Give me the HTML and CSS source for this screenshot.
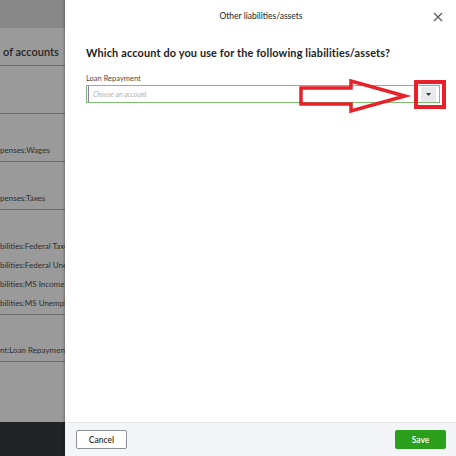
FILE: index.html
```html
<!DOCTYPE html>
<html lang="en">
<head>
    <meta charset="UTF-8">
    <meta name="viewport" content="width=device-width, initial-scale=1.0">
    <title>Other liabilities/assets</title>
    <link rel="stylesheet" href="styles.css">
</head>
<body>
    <!-- page behind the drawer, dimmed -->
    <aside class="backdrop">
        <div class="backdrop_top"></div>
        <div class="backdrop_list">
            <div class="list_head">of accounts</div>
            <div class="list_group"></div>
            <div class="list_group"><span>penses:Wages</span></div>
            <div class="list_group"><span>penses:Taxes</span></div>
            <div class="list_group multi">
                <span>bilities:Federal Taxes</span>
                <span>bilities:Federal Unemployment</span>
                <span>bilities:MS Income Tax</span>
                <span>bilities:MS Unemployment</span>
            </div>
            <div class="list_group last"><span>nt:Loan Repayment</span></div>
        </div>
        <div class="backdrop_bottom"></div>
    </aside>

    <section class="drawer">
        <header class="drawer_header">
            <span class="drawer_title">Other liabilities/assets</span>
            <button class="close_btn" type="button" aria-label="Close">
                <svg width="10" height="10" viewBox="0 0 10 10"><path d="M1 1L9 9M9 1L1 9" stroke="#555" stroke-width="1.1"/></svg>
            </button>
        </header>

        <div class="drawer_body">
            <h1>Which account do you use for the following liabilities/assets?</h1>

            <label for="loan_account">Loan Repayment</label>
            <div class="combo">
                <input type="text" id="loan_account" placeholder="Choose an account">
                <span class="combo_btn">
                    <svg width="5" height="3" viewBox="0 0 5 3"><path d="M0 0H5L2.5 3Z" fill="#333"/></svg>
                </span>
            </div>
        </div>

        <footer class="drawer_footer">
            <button class="btn_cancel" type="button">Cancel</button>
            <button class="btn_save" type="button">Save</button>
        </footer>

        <!-- red annotation over the dropdown -->
        <svg class="annotation" width="160" height="40" viewBox="0 0 160 40">
            <path d="M2 9H52V2L106 17L52 32V25H2Z" fill="none" stroke="#e8202a" stroke-width="3.5" stroke-linejoin="miter"/>
            <rect x="117" y="3" width="28" height="25" fill="none" stroke="#e8202a" stroke-width="4"/>
        </svg>
    </section>
</body>
</html>
```

FILE: styles.css
```css
html, body {
    margin: 0;
    height: 100%;
}

body {
    display: flex;
    font-family: Lato, "Open Sans", sans-serif;
    background: #ffffff;
    overflow: hidden;
}

/* dimmed page on the left */
.backdrop {
    width: 65px;
    flex-shrink: 0;
    display: flex;
    flex-direction: column;
    background: #9a9a9a;
    color: #2e2e2e;
    overflow: hidden;
    white-space: nowrap;
}

.backdrop_top {
    height: 28px;
    background: #878787;
}

.backdrop_list {
    flex: 1;
}

.list_head {
    height: 38px;
    line-height: 48px;
    box-sizing: border-box;
    padding-left: 3px;
    font-size: 11px;
    font-weight: 600;
    color: #262626;
    border-bottom: 1px solid #6c6c6c;
}

.list_group {
    height: 48px;
    border-bottom: 1px solid #6c6c6c;
    font-size: 8px;
    display: flex;
    flex-direction: column;
    justify-content: flex-end;
    padding-bottom: 6px;
    box-sizing: border-box;
}

.list_group.multi {
    height: 105px;
    gap: 9px;
    padding-bottom: 6px;
}

.list_group.last {
    height: 47px;
}

.backdrop_bottom {
    height: 34px;
    background: #222327;
}

/* drawer */
.drawer {
    flex: 1;
    position: relative;
    display: flex;
    flex-direction: column;
    background: #ffffff;
    box-shadow: -1px 0 2px rgba(0, 0, 0, 0.25);
}

.drawer_header {
    height: 32px;
    display: flex;
    align-items: center;
    justify-content: center;
    position: relative;
}

.drawer_title {
    font-size: 8.5px;
    color: #222;
    padding-left: 1px;
}

.close_btn {
    position: absolute;
    right: 12px;
    top: 11px;
    width: 12px;
    height: 12px;
    padding: 0;
    border: none;
    background: none;
    display: flex;
    align-items: center;
    justify-content: center;
}

.drawer_body {
    flex: 1;
    padding: 14px 16px 0 21px;
}

h1 {
    margin: 0 0 15px;
    font-size: 10.9px;
    font-weight: 700;
    color: #1d1d1d;
    letter-spacing: 0.15px;
}

label {
    display: block;
    font-size: 7.5px;
    color: #4a4a4a;
    margin-bottom: 2px;
}

.combo {
    display: flex;
    align-items: center;
    height: 18px;
    box-sizing: border-box;
    border: 1px solid #7cc06f;
    padding-right: 3px;
}

.combo input {
    flex: 1;
    border: none;
    outline: none;
    padding: 0 0 0 4px;
    font-family: inherit;
    font-size: 6.8px;
    height: 100%;
    background: transparent;
    border-left: 1px solid #8a7fb0;
    margin-left: 1px;
}

.combo input::placeholder {
    color: #b0b0b0;
    font-style: italic;
}

.combo_btn {
    width: 15px;
    height: 15px;
    background: #e8e9ec;
    display: flex;
    align-items: center;
    justify-content: center;
}

.drawer_footer {
    height: 34px;
    box-sizing: border-box;
    background: #f4f5f8;
    border-top: 1px solid #e6e7ea;
    display: flex;
    align-items: center;
    justify-content: space-between;
    padding: 0 10px 0 11px;
}

.btn_cancel,
.btn_save {
    width: 51px;
    height: 19px;
    border-radius: 2px;
    font-family: inherit;
    font-size: 8.5px;
    font-weight: 600;
    cursor: pointer;
}

.btn_cancel {
    background: #ffffff;
    border: 1px solid #8d9096;
    color: #333;
}

.btn_save {
    background: #2ca01c;
    border: none;
    color: #ffffff;
}

.annotation {
    position: absolute;
    left: 234px;
    top: 79px;
}
```
